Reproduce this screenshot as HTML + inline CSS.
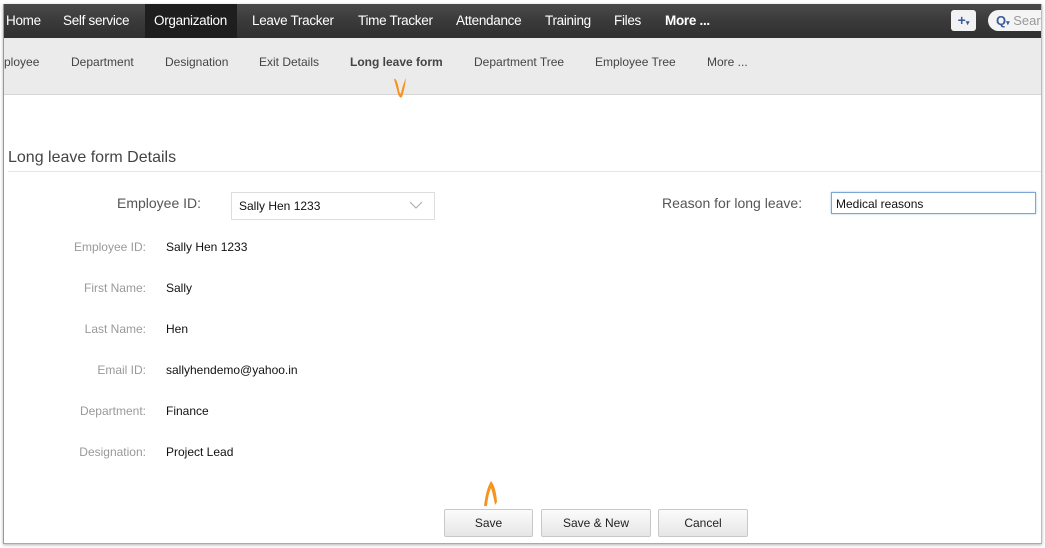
<!DOCTYPE html>
<html><head><meta charset="utf-8"><style>
body{margin:0;width:1045px;height:548px;background:#fff;position:relative;overflow:hidden;font-family:"Liberation Sans",Arial,sans-serif}
.a{position:absolute;white-space:nowrap}
#frame{position:absolute;left:3px;top:4px;width:1037px;height:539px;border-left:1px solid #999;border-right:1px solid #bbb;border-bottom:1px solid #aaa;box-shadow:0 1px 3px rgba(0,0,0,.3);overflow:hidden;background:#fff}
#top{position:absolute;left:0;top:0;width:1037px;height:34px;background:linear-gradient(#4a4a4a,#3a3a3a 50%,#303030)}
#top .a{color:#fff;font-size:13.5px;top:9px;letter-spacing:-0.3px}
#sub{position:absolute;left:0;top:34px;width:1037px;height:56px;background:#ebebeb;border-bottom:1px solid #d6d6d6}
#sub .a{color:#444;font-size:12px;top:17px}
.lab{color:#999;font-size:12px;text-align:right;width:142px;left:0}
.val{color:#111;font-size:12px;left:162px}
.btn{position:absolute;top:505px;height:26px;border:1px solid #c8c8c8;border-radius:2px;background:linear-gradient(#fbfbfb,#e6e6e6);font-size:12px;color:#222;text-align:center;line-height:26px}
</style></head><body>
<div id="frame">
<div id="top">
<div class="a" style="left:2px">Home</div>
<div class="a" style="left:59px">Self service</div>
<div style="position:absolute;left:141px;top:0;width:92px;height:34px;background:#1e1e1e"></div>
<div class="a" style="left:150px">Organization</div>
<div class="a" style="left:248px">Leave Tracker</div>
<div class="a" style="left:354px">Time Tracker</div>
<div class="a" style="left:452px">Attendance</div>
<div class="a" style="left:541px">Training</div>
<div class="a" style="left:610px">Files</div>
<div class="a" style="left:661px;font-weight:bold">More ...</div>
<div style="position:absolute;left:947px;top:6px;width:25px;height:21px;background:#f2f2f2;border-radius:3px;color:#3a5a9a;font-weight:bold;font-size:14px;text-align:center;line-height:20px">+<span style="font-size:7px">▾</span></div>
<div style="position:absolute;left:984px;top:6px;width:70px;height:21px;background:#f4f4f4;border-radius:11px;font-size:13px;line-height:21px;color:#999"><span style="color:#3a5a9a;margin-left:8px;font-weight:bold">Q<span style="font-size:7px">▾</span></span> Sear</div>
</div>
<div id="sub">
<div class="a" style="left:0">ployee</div>
<div class="a" style="left:67px">Department</div>
<div class="a" style="left:161px">Designation</div>
<div class="a" style="left:255px">Exit Details</div>
<div class="a" style="left:346px;font-weight:bold">Long leave form</div>
<div class="a" style="left:470px">Department Tree</div>
<div class="a" style="left:591px">Employee Tree</div>
<div class="a" style="left:703px">More ...</div>
<svg style="position:absolute;left:387px;top:38px" width="18" height="24"><path d="M3 3 Q6 2 8 14 Q9 19 10 17 Q12 8 15 2 Q14 12 11 21 Q9 23 7 18 Q5 10 3 3Z" fill="#f7931e"/></svg>
</div>
<div class="a" style="left:4px;top:145px;font-size:16px;color:#444">Long leave form Details</div>
<div style="position:absolute;left:4px;top:167px;width:1033px;height:1px;background:#e6e6e6"></div>
<div class="a" style="left:113px;top:191px;font-size:14px;color:#555">Employee ID:</div>
<div style="position:absolute;left:227px;top:188px;width:202px;height:26px;border:1px solid #ddd"></div>
<div class="a" style="left:235px;top:195px;font-size:12px;color:#111">Sally Hen 1233</div>
<svg style="position:absolute;left:405px;top:197px" width="14" height="8"><path d="M1 1 L7 7 L13 1" stroke="#aaa" fill="none"/></svg>
<div class="a" style="left:658px;top:191px;font-size:14px;color:#555">Reason for long leave:</div>
<div style="position:absolute;left:827px;top:188px;width:203px;height:20px;border:1px solid #7aa7d6;box-shadow:0 0 2px #9cc3ea"></div>
<div class="a" style="left:832px;top:193px;font-size:12px;color:#111">Medical reasons</div>
<div class="a lab" style="top:236px">Employee ID:</div><div class="a val" style="top:236px">Sally Hen 1233</div>
<div class="a lab" style="top:277px">First Name:</div><div class="a val" style="top:277px">Sally</div>
<div class="a lab" style="top:318px">Last Name:</div><div class="a val" style="top:318px">Hen</div>
<div class="a lab" style="top:359px">Email ID:</div><div class="a val" style="top:359px">sallyhendemo@yahoo.in</div>
<div class="a lab" style="top:400px">Department:</div><div class="a val" style="top:400px">Finance</div>
<div class="a lab" style="top:441px">Designation:</div><div class="a val" style="top:441px">Project Lead</div>
<svg style="position:absolute;left:477px;top:475px" width="18" height="28"><path d="M3 27 Q5 10 10 2 Q15 8 16 23 L14 26 Q12 15 10 9 Q7 16 6 27Z" fill="#f7931e"/></svg>
<div class="btn" style="left:440px;width:87px">Save</div>
<div class="btn" style="left:537px;width:108px">Save &amp; New</div>
<div class="btn" style="left:654px;width:88px">Cancel</div>
</div>
</body></html>
